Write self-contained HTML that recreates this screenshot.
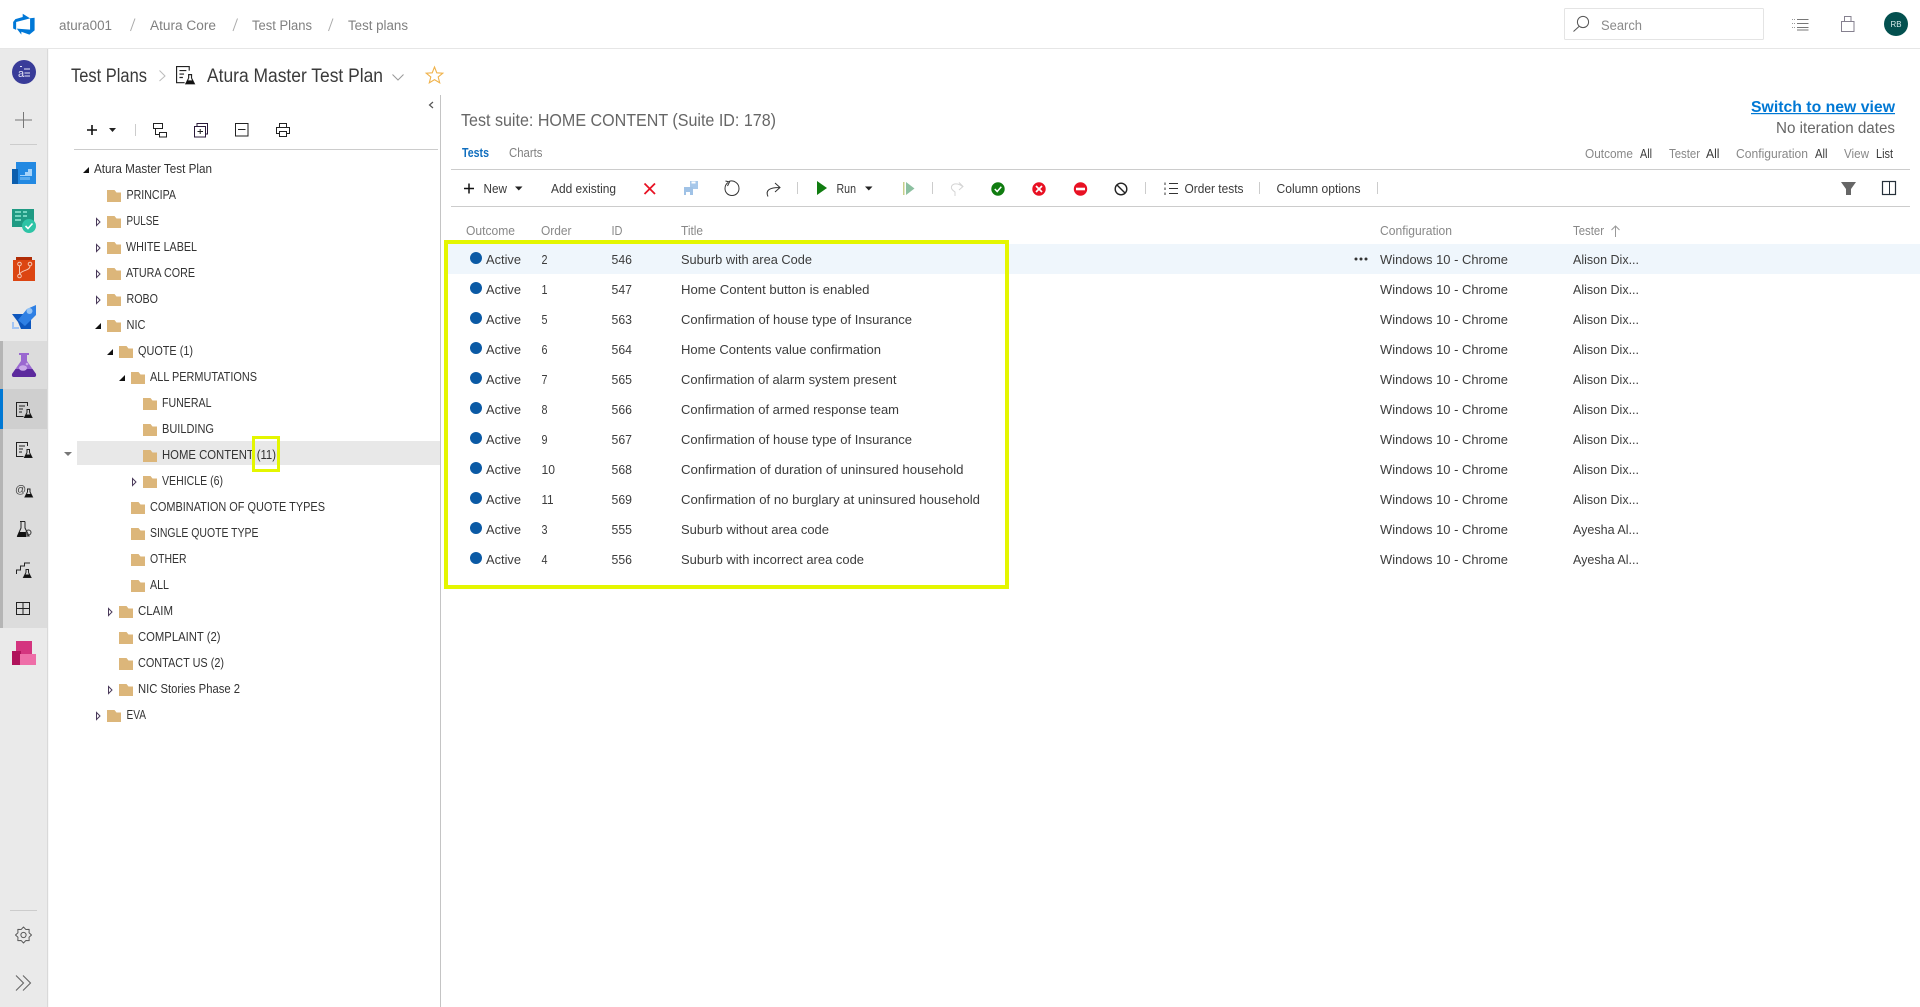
<!DOCTYPE html>
<html lang="en"><head><meta charset="utf-8"><title>Test plans</title>
<style>
html,body{margin:0;padding:0;background:#fff;width:1920px;height:1007px;overflow:hidden}
svg{display:block;font-family:"Liberation Sans",sans-serif}
text{white-space:pre}
.t{font-size:12.5px;fill:#333}
.r{font-size:13px;fill:#3c3c3c}
.h{font-size:12.5px;fill:#888}
.n{font-size:13.5px;fill:#808080}
.k{font-size:19px;fill:#3a3a3a}
.b{font-size:12.5px;fill:#3a3a3a}
.i{fill:none;stroke:#222;stroke-width:1}
</style></head><body>
<svg width="1920" height="1007" viewBox="0 0 1920 1007" xmlns="http://www.w3.org/2000/svg">
<defs>
<path id="f" d="M0 0H7.5L9.5 2.5H14V12H0Z" fill="#dcb67a"/>
<path id="c" d="M.5 .5L4 4L.5 7.5Z" fill="#fff" stroke="#4a3a5a"/>
<path id="e" d="M6 0V6H0Z" fill="#111"/>
<g id="fl"><path d="M10.5 7.5H14M11 7.5V10.5" fill="none" stroke="#222"/><path d="M13.5 7.5V10.5M11 10.5L8.5 15.5H16L13.5 10.5" fill="none" stroke="#222"/><path d="M10 12.5H14.5L16 15.5H8.5Z" fill="#111"/></g>
<g id="pi"><path d="M11.5 4V.5H.5V14.5H7.5" class="i"/><path d="M3 4H9M3 7H7M3 10H6" class="i"/><use href="#fl"/></g>
<g id="dot"><ellipse cx="476" cy="0" rx="6" ry="6" fill="#0b5aa5"/></g>
</defs>

<!-- top bar -->
<rect x="0" y="48" width="1920" height="1" fill="#e6e6e6"/>
<path transform="translate(12.5 12.5) scale(1.3)" fill="#0078d7" d="M17 4v9.74l-4 3.28-6.2-2.26V17l-3.51-4.59 10.23.8V4.44zm-3.41.49L7.85 1v2.43L2.22 5.08.5 7.29v5.04l2.3 1V7.32z"/>
<text class="n" x="59" y="30" textLength="53" lengthAdjust="spacingAndGlyphs">atura001</text>
<path d="M135 18.500L130.500 31M237.500 18.500L233 31M333 18.500L328.500 31" stroke="#aaa" fill="none"/>
<text class="n" x="150" y="30" textLength="66" lengthAdjust="spacingAndGlyphs">Atura Core</text>
<text class="n" x="252" y="30" textLength="60" lengthAdjust="spacingAndGlyphs">Test Plans</text>
<text class="n" x="348" y="30" textLength="60" lengthAdjust="spacingAndGlyphs">Test plans</text>

<rect x="1564.5" y="8.5" width="199" height="31" fill="#fff" stroke="#e4e4e4" rx="1"/>
<circle cx="1583" cy="22" r="5.6" fill="none" stroke="#555"/><path d="M1579 26.500L1573.500 31.500" stroke="#555" fill="none"/>
<text x="1601" y="30" font-size="13.500" fill="#8a8a8a" textLength="41" lengthAdjust="spacingAndGlyphs">Search</text>
<path d="M1797 19.500H1808.500M1797 23.500H1808.500M1797 27.500H1808.500M1797 30H1808.500" stroke="#777" fill="none"/>
<path d="M1792 19.500H1795M1792 23.500H1795M1792 27.500H1795" stroke="#999" stroke-dasharray="1 1" fill="none"/>
<rect x="1841.500" y="21.500" width="12.500" height="10" fill="none" stroke="#85808f"/><path d="M1844.500 21V16.500H1851V21" fill="none" stroke="#85808f"/>
<circle cx="1896" cy="24" r="12" fill="#03504f"/>
<text x="1890.500" y="27" font-size="8.500" fill="#d8ecec" textLength="11" lengthAdjust="spacingAndGlyphs">RB</text>

<!-- left nav -->
<rect x="0" y="49" width="47" height="958" fill="#eaeaea"/>
<rect x="47" y="49" width="1.200" height="958" fill="#d9d9d9"/>
<rect x="0" y="341" width="47" height="287" fill="#dcdcdc"/>
<rect x="0" y="341" width="3" height="287" fill="#b5b5b5"/>
<rect x="0" y="389" width="47" height="40" fill="#cfcfcf"/>
<rect x="0" y="389" width="3" height="40" fill="#0078d4"/>

<circle cx="24" cy="72" r="12" fill="#393c99"/>
<text x="18" y="77" font-size="11" fill="#e8e8f8">a</text>
<path d="M24 69H30M24.500 73H30M24.500 76H30M20 66.500H22" stroke="#e8e8f8" fill="none"/>
<path d="M15 120H32M23.500 112V128" stroke="#777" fill="none"/>
<rect x="10" y="144" width="27" height="1" fill="#ccc"/>

<rect x="16" y="162" width="20" height="22" fill="#2389e2"/><rect x="12" y="169" width="6" height="15" fill="#0c5ead"/>
<path d="M20 175H25V172H28V169H32V176H20Z" fill="#a5d3fa"/><rect x="20" y="177" width="10" height="3" fill="#5aabee"/>

<rect x="12" y="209" width="22" height="18" fill="#1f9a83"/>
<path d="M15 212H21M23 212H27M15 216H21M23 216H27M15 220H21" stroke="#74d4bf" stroke-width="2" fill="none"/>
<circle cx="29" cy="226" r="7" fill="#2ec4a6"/><path d="M25.500 226L28 228.500L32.500 223.500" stroke="#fff" stroke-width="1.600" fill="none"/>

<path d="M16 257H32V260H35V281H13V260H16Z" fill="#dc4512"/><path d="M16 257H32V260H16Z" fill="#b02c06"/>
<circle cx="19.500" cy="264" r="1.800" fill="none" stroke="#f4c9b6"/><circle cx="30" cy="264" r="1.800" fill="none" stroke="#f4c9b6"/><circle cx="19.500" cy="276" r="1.800" fill="none" stroke="#f4c9b6"/>
<path d="M19.500 266V274M30 266C30 271 21 270 20 274" stroke="#f4c9b6" fill="none"/>

<path d="M12 314H23L27 320L22 329H21L18 322Z" fill="#0e57bd"/><path d="M31 316V329H21L30 318Z" fill="#0e57bd"/>
<path d="M18 320L27 309L36 305V315L25 326Z" fill="#2f80e4"/><circle cx="29.500" cy="311" r="3" fill="#93c3f6"/>
<path d="M13 322V328H19" stroke="#a3c5f4" stroke-width="2" fill="none"/>

<path d="M19 353H29V355H27V361L36 374Q36.500 377 34 377H14Q11.500 377 12 374L21 361V355H19Z" fill="#9a68d0"/>
<path d="M15.500 369H32.500L36 374Q36.500 377 34 377H14Q11.500 377 12 374Z" fill="#5c2a9d"/>
<ellipse cx="23" cy="368" rx="4" ry="2.800" fill="#c9a9e8"/><circle cx="27" cy="364" r="1.300" fill="#c9a9e8"/>

<use href="#pi" x="16" y="402"/>
<use href="#pi" x="16" y="442"/>
<text x="15" y="493" font-size="11" fill="#444">@</text><use href="#fl" x="16.500" y="481.500"/>
<path d="M20 521.500H25M21 521.500V528L17.500 536H29L25 528V521.500" fill="none" stroke="#222"/><path d="M19 532H26V537H17Z" fill="#111"/><circle cx="28.500" cy="532.500" r="2.500" fill="none" stroke="#333"/>
<path d="M16.500 574V570H20.500V566H24.500V563H30" fill="none" stroke="#222"/><use href="#fl" x="15" y="562"/>
<rect x="16.500" y="602.500" width="13" height="12" fill="none" stroke="#222"/><path d="M23 602V615M16 608.500H30" stroke="#222" fill="none"/>

<rect x="16" y="641" width="16" height="14" fill="#d4357f"/><rect x="12" y="651" width="9" height="14" fill="#b0135b"/><rect x="20" y="654" width="16" height="11" fill="#ee6ea8"/>

<rect x="10" y="910" width="27" height="1" fill="#ccc"/>
<path transform="translate(23.500 935)" d="M8 0L5.540 2.300L5.660 5.660L2.300 5.540L0 8L-2.300 5.540L-5.660 5.660L-5.540 2.300L-8 0L-5.540 -2.300L-5.660 -5.660L-2.300 -5.540L0 -8L2.300 -5.540L5.660 -5.660L5.540 -2.300Z" fill="none" stroke="#5a5a5a" stroke-linejoin="round"/>
<circle cx="23.500" cy="935" r="2.600" fill="none" stroke="#5a5a5a"/>
<path d="M16 975.500L23.500 983L16 990.500M23 975.500L30.500 983L23 990.500" fill="none" stroke="#666" stroke-width="1.100"/>

<!-- page header -->
<text class="k" x="71" y="82" textLength="76" lengthAdjust="spacingAndGlyphs">Test Plans</text>
<path d="M159.500 70.500L165 76L159.500 81" fill="none" stroke="#bbb"/>
<use href="#pi" transform="translate(176 66) scale(1.150)"/>
<text class="k" x="207" y="82" textLength="176" lengthAdjust="spacingAndGlyphs">Atura Master Test Plan</text>
<path d="M392.500 74.500L398 80L403.500 74.500" fill="none" stroke="#999"/>
<path d="M434.500 67L436.800 72.800L442.800 73.200L438.200 77L439.700 82.800L434.500 79.600L429.300 82.800L430.800 77L426.200 73.200L432.200 72.800Z" fill="none" stroke="#f0b24a" stroke-width="1.100"/>

<!-- splitter -->
<rect x="440" y="95" width="1" height="912" fill="#c4c4c4"/>
<path d="M433 102L429.500 105L433 108" fill="none" stroke="#555" stroke-width="1.200"/>

<!-- tree toolbar -->
<path d="M87 130H97M92 125V135" stroke="#111" stroke-width="1.600" fill="none"/>
<path d="M109 128H116L112.500 132Z" fill="#222"/>
<rect x="135" y="124" width="1" height="12" fill="#ccc"/>
<rect x="153.500" y="123.500" width="9" height="5" class="i"/><rect x="159.500" y="132.500" width="7" height="4.500" class="i"/><path d="M155.500 128.500V134.500H159.500" class="i"/>
<rect x="194.500" y="126.500" width="11" height="10.500" fill="none" stroke="#2a1a3a"/><path d="M197 126V123.500H207.500V134H205.500" fill="none" stroke="#2a1a3a"/><path d="M197.500 131.500H203M200.200 129V134" stroke="#222" fill="none"/>
<rect x="235.500" y="123.500" width="12.500" height="12.500" class="i"/><path d="M238 129.500H245.500" class="i"/>
<rect x="276.500" y="127.500" width="13" height="6" class="i"/><rect x="279.500" y="123.500" width="7" height="4" class="i"/><rect x="279.500" y="131.500" width="7" height="5" fill="#fff" stroke="#222"/>
<rect x="74" y="149" width="364" height="1" fill="#ccc"/>

<!-- tree selected row -->
<rect x="77" y="441" width="363" height="24" fill="#e8e8e8"/>
<path d="M64 452H72L68 456Z" fill="#777"/>

<!-- tree -->
<use href="#e" x="83" y="167"/>
<text class="t" x="94" y="173" textLength="118" lengthAdjust="spacingAndGlyphs">Atura Master Test Plan</text>
<use href="#f" x="107" y="190"/>
<text class="t" x="126.500" y="199" textLength="49.500" lengthAdjust="spacingAndGlyphs">PRINCIPA</text>
<use href="#c" x="96" y="218"/><use href="#f" x="107" y="216"/>
<text class="t" x="126.500" y="225" textLength="32.500" lengthAdjust="spacingAndGlyphs">PULSE</text>
<use href="#c" x="96" y="244"/><use href="#f" x="107" y="242"/>
<text class="t" x="126" y="251" textLength="71" lengthAdjust="spacingAndGlyphs">WHITE LABEL</text>
<use href="#c" x="96" y="270"/><use href="#f" x="107" y="268"/>
<text class="t" x="126" y="277" textLength="69" lengthAdjust="spacingAndGlyphs">ATURA CORE</text>
<use href="#c" x="96" y="296"/><use href="#f" x="107" y="294"/>
<text class="t" x="126.500" y="303" textLength="31.500" lengthAdjust="spacingAndGlyphs">ROBO</text>
<use href="#e" x="95" y="323"/><use href="#f" x="107" y="320"/>
<text class="t" x="126.500" y="329" textLength="19" lengthAdjust="spacingAndGlyphs">NIC</text>
<use href="#e" x="107" y="349"/><use href="#f" x="119" y="346"/>
<text class="t" x="138" y="355" textLength="55" lengthAdjust="spacingAndGlyphs">QUOTE (1)</text>
<use href="#e" x="119" y="375"/><use href="#f" x="131" y="372"/>
<text class="t" x="150" y="381" textLength="107" lengthAdjust="spacingAndGlyphs">ALL PERMUTATIONS</text>
<use href="#f" x="143" y="398"/>
<text class="t" x="162" y="407" textLength="49.500" lengthAdjust="spacingAndGlyphs">FUNERAL</text>
<use href="#f" x="143" y="424"/>
<text class="t" x="162" y="433" textLength="52" lengthAdjust="spacingAndGlyphs">BUILDING</text>
<use href="#f" x="143" y="450"/>
<text class="t" x="162" y="459" textLength="114" lengthAdjust="spacingAndGlyphs">HOME CONTENT (11)</text>
<use href="#c" x="132" y="478"/><use href="#f" x="143" y="476"/>
<text class="t" x="162" y="485" textLength="61" lengthAdjust="spacingAndGlyphs">VEHICLE (6)</text>
<use href="#f" x="131" y="502"/>
<text class="t" x="150" y="511" textLength="175" lengthAdjust="spacingAndGlyphs">COMBINATION OF QUOTE TYPES</text>
<use href="#f" x="131" y="528"/>
<text class="t" x="150" y="537" textLength="108.500" lengthAdjust="spacingAndGlyphs">SINGLE QUOTE TYPE</text>
<use href="#f" x="131" y="554"/>
<text class="t" x="150" y="563" textLength="36.500" lengthAdjust="spacingAndGlyphs">OTHER</text>
<use href="#f" x="131" y="580"/>
<text class="t" x="150" y="589" textLength="19" lengthAdjust="spacingAndGlyphs">ALL</text>
<use href="#c" x="108" y="608"/><use href="#f" x="119" y="606"/>
<text class="t" x="138" y="615" textLength="35" lengthAdjust="spacingAndGlyphs">CLAIM</text>
<use href="#f" x="119" y="632"/>
<text class="t" x="138" y="641" textLength="82.500" lengthAdjust="spacingAndGlyphs">COMPLAINT (2)</text>
<use href="#f" x="119" y="658"/>
<text class="t" x="138" y="667" textLength="86" lengthAdjust="spacingAndGlyphs">CONTACT US (2)</text>
<use href="#c" x="108" y="686"/><use href="#f" x="119" y="684"/>
<text class="t" x="138" y="693" textLength="102" lengthAdjust="spacingAndGlyphs">NIC Stories Phase 2</text>
<use href="#c" x="96" y="712"/><use href="#f" x="107" y="710"/>
<text class="t" x="126.500" y="719" textLength="19.500" lengthAdjust="spacingAndGlyphs">EVA</text>

<!-- right header -->
<text x="461" y="126" font-size="17.500" fill="#666" textLength="315" lengthAdjust="spacingAndGlyphs">Test suite: HOME CONTENT (Suite ID: 178)</text>
<text x="462" y="157" font-size="12.500" font-weight="bold" fill="#106ebe" textLength="27" lengthAdjust="spacingAndGlyphs">Tests</text>
<text x="509" y="157" font-size="12.500" fill="#808080" textLength="33.500" lengthAdjust="spacingAndGlyphs">Charts</text>
<text x="1751" y="112" font-size="16px" font-weight="bold" fill="#0078d4" textLength="144" lengthAdjust="spacingAndGlyphs">Switch to new view</text>
<rect x="1751" y="113" width="144" height="1.200" fill="#0078d4"/>
<text x="1776" y="133" font-size="16" fill="#666" textLength="119" lengthAdjust="spacingAndGlyphs">No iteration dates</text>
<text class="h" x="1585" y="158" textLength="48" lengthAdjust="spacingAndGlyphs">Outcome</text>
<text class="b" x="1640" y="158" textLength="12" lengthAdjust="spacingAndGlyphs">All</text>
<text class="h" x="1669" y="158" textLength="31" lengthAdjust="spacingAndGlyphs">Tester</text>
<text class="b" x="1706" y="158" textLength="13.500" lengthAdjust="spacingAndGlyphs">All</text>
<text class="h" x="1736" y="158" textLength="72" lengthAdjust="spacingAndGlyphs">Configuration</text>
<text class="b" x="1815" y="158" textLength="12.500" lengthAdjust="spacingAndGlyphs">All</text>
<text class="h" x="1844" y="158" textLength="25" lengthAdjust="spacingAndGlyphs">View</text>
<text class="b" x="1876" y="158" textLength="17" lengthAdjust="spacingAndGlyphs">List</text>
<rect x="451" y="169" width="1459" height="1" fill="#ccc"/>
<rect x="451" y="206" width="1459" height="1" fill="#ccc"/>

<!-- right toolbar -->
<path d="M464 188.500H474M469 183.500V193.500" stroke="#111" stroke-width="1.500" fill="none"/>
<text class="b" x="483.500" y="193" textLength="23.500" lengthAdjust="spacingAndGlyphs">New</text>
<path d="M515 186.500H522.500L518.800 190.500Z" fill="#222"/>
<text class="b" x="551" y="193" textLength="65" lengthAdjust="spacingAndGlyphs">Add existing</text>
<path d="M644.500 183.500L655 194M655 183.500L644.500 194" stroke="#e81123" stroke-width="1.800" fill="none"/>
<rect x="690" y="181" width="8" height="8" fill="#a8c8ea"/><rect x="684" y="187" width="9" height="8" fill="#a0c2e6"/><rect x="691.500" y="181.500" width="4" height="2" fill="#fff"/><rect x="686" y="192" width="4" height="3" fill="#fff"/>
<path d="M729 181.500C734 179.500 739 183.500 739 188.500C739 192.500 736 195.500 732 195.500C728 195.500 725 192.500 725 188.500C725 186 726 184 728 182.500" fill="none" stroke="#333"/><path d="M725.500 181L729.500 182L727.500 186" fill="none" stroke="#333"/>
<path d="M768 196.500C765 190 770 187.500 779.500 187.500M775 183L780 187.500L775 192" fill="none" stroke="#333"/>
<rect x="797" y="182" width="1" height="12" fill="#ccc"/>
<path d="M817 181V195L827 188Z" fill="#107c10"/>
<text class="b" x="836.500" y="193" textLength="19.500" lengthAdjust="spacingAndGlyphs">Run</text>
<path d="M865 186.500H872.500L868.800 190.500Z" fill="#222"/>
<rect x="903" y="182" width="1.500" height="13" fill="#c7cf8b"/><path d="M906 182V195L914.500 188.500Z" fill="#8cc0a0"/>
<rect x="932" y="182" width="1" height="12" fill="#ccc"/>
<path d="M955 196V192C952 190 951 188 951.500 186.500C953 183 958 183 962.500 186.500M959 182.500L963 186.500L959 190" fill="none" stroke="#d4d4d4"/>
<circle cx="998" cy="189" r="6.700" fill="#107c10"/><path d="M994.800 189L997.200 191.500L1001.300 186.800" stroke="#fff" stroke-width="1.500" fill="none"/>
<circle cx="1039" cy="189" r="6.700" fill="#e81123"/><path d="M1036 186L1042 192M1042 186L1036 192" stroke="#fff" stroke-width="1.700" fill="none"/>
<circle cx="1080.500" cy="189" r="6.700" fill="#e81123"/><rect x="1076" y="187.700" width="9" height="2.600" fill="#fff"/>
<circle cx="1121" cy="189" r="5.800" fill="none" stroke="#222" stroke-width="1.400"/><path d="M1117 185L1125 193" stroke="#222" stroke-width="1.400"/>
<rect x="1145" y="182" width="1" height="12" fill="#ccc"/>
<path d="M1169 183.500H1178M1169 188.500H1178M1169 193.500H1178" stroke="#333" fill="none"/><path d="M1165 182.500V185M1165 187.500V190M1165 192.500V195" stroke="#333" fill="none"/>
<text class="b" x="1184.500" y="193" textLength="59" lengthAdjust="spacingAndGlyphs">Order tests</text>
<rect x="1259" y="182" width="1" height="12" fill="#ccc"/>
<text class="b" x="1276.500" y="193" textLength="84" lengthAdjust="spacingAndGlyphs">Column options</text>
<rect x="1377" y="182" width="1" height="12" fill="#ccc"/>
<path d="M1841 182H1856L1851 189V195H1846V189Z" fill="#666"/>
<rect x="1882.500" y="181.500" width="13" height="13" fill="none" stroke="#26303a" stroke-width="1.200"/><path d="M1889.500 181V195" stroke="#26303a"/>

<!-- grid header -->
<text class="h" x="466" y="235" textLength="49" lengthAdjust="spacingAndGlyphs">Outcome</text>
<text class="h" x="541" y="235" textLength="30.500" lengthAdjust="spacingAndGlyphs">Order</text>
<text class="h" x="611.500" y="235" textLength="11" lengthAdjust="spacingAndGlyphs">ID</text>
<text class="h" x="681" y="235" textLength="22" lengthAdjust="spacingAndGlyphs">Title</text>
<text class="h" x="1380" y="235" textLength="72" lengthAdjust="spacingAndGlyphs">Configuration</text>
<text class="h" x="1573" y="235" textLength="31" lengthAdjust="spacingAndGlyphs">Tester</text>
<path d="M1615.500 237V226M1611.500 230L1615.500 226L1619.500 230" fill="none" stroke="#999"/>

<!-- grid rows -->
<rect x="444" y="244" width="1476" height="30" fill="#eff6fc"/>
<circle cx="1356" cy="259" r="1.500" fill="#333"/><circle cx="1361" cy="259" r="1.500" fill="#333"/><circle cx="1366" cy="259" r="1.500" fill="#333"/>

<use href="#dot" y="258"/><text class="r" x="486" y="264" textLength="35" lengthAdjust="spacingAndGlyphs">Active</text><text class="r" x="541.500" y="264" textLength="6" lengthAdjust="spacingAndGlyphs">2</text><text class="r" x="611.500" y="264" textLength="20.500" lengthAdjust="spacingAndGlyphs">546</text><text class="r" x="681" y="264" textLength="131" lengthAdjust="spacingAndGlyphs">Suburb with area Code</text><text class="r" x="1380" y="264" textLength="128" lengthAdjust="spacingAndGlyphs">Windows 10 - Chrome</text><text class="r" x="1573" y="264" textLength="66" lengthAdjust="spacingAndGlyphs">Alison Dix...</text>
<use href="#dot" y="288"/><text class="r" x="486" y="294" textLength="35" lengthAdjust="spacingAndGlyphs">Active</text><text class="r" x="541.500" y="294" textLength="6" lengthAdjust="spacingAndGlyphs">1</text><text class="r" x="611.500" y="294" textLength="20.500" lengthAdjust="spacingAndGlyphs">547</text><text class="r" x="681" y="294" textLength="188.500" lengthAdjust="spacingAndGlyphs">Home Content button is enabled</text><text class="r" x="1380" y="294" textLength="128" lengthAdjust="spacingAndGlyphs">Windows 10 - Chrome</text><text class="r" x="1573" y="294" textLength="66" lengthAdjust="spacingAndGlyphs">Alison Dix...</text>
<use href="#dot" y="318"/><text class="r" x="486" y="324" textLength="35" lengthAdjust="spacingAndGlyphs">Active</text><text class="r" x="541.500" y="324" textLength="6" lengthAdjust="spacingAndGlyphs">5</text><text class="r" x="611.500" y="324" textLength="20.500" lengthAdjust="spacingAndGlyphs">563</text><text class="r" x="681" y="324" textLength="231" lengthAdjust="spacingAndGlyphs">Confirmation of house type of Insurance</text><text class="r" x="1380" y="324" textLength="128" lengthAdjust="spacingAndGlyphs">Windows 10 - Chrome</text><text class="r" x="1573" y="324" textLength="66" lengthAdjust="spacingAndGlyphs">Alison Dix...</text>
<use href="#dot" y="348"/><text class="r" x="486" y="354" textLength="35" lengthAdjust="spacingAndGlyphs">Active</text><text class="r" x="541.500" y="354" textLength="6" lengthAdjust="spacingAndGlyphs">6</text><text class="r" x="611.500" y="354" textLength="20.500" lengthAdjust="spacingAndGlyphs">564</text><text class="r" x="681" y="354" textLength="200" lengthAdjust="spacingAndGlyphs">Home Contents value confirmation</text><text class="r" x="1380" y="354" textLength="128" lengthAdjust="spacingAndGlyphs">Windows 10 - Chrome</text><text class="r" x="1573" y="354" textLength="66" lengthAdjust="spacingAndGlyphs">Alison Dix...</text>
<use href="#dot" y="378"/><text class="r" x="486" y="384" textLength="35" lengthAdjust="spacingAndGlyphs">Active</text><text class="r" x="541.500" y="384" textLength="6" lengthAdjust="spacingAndGlyphs">7</text><text class="r" x="611.500" y="384" textLength="20.500" lengthAdjust="spacingAndGlyphs">565</text><text class="r" x="681" y="384" textLength="215.500" lengthAdjust="spacingAndGlyphs">Confirmation of alarm system present</text><text class="r" x="1380" y="384" textLength="128" lengthAdjust="spacingAndGlyphs">Windows 10 - Chrome</text><text class="r" x="1573" y="384" textLength="66" lengthAdjust="spacingAndGlyphs">Alison Dix...</text>
<use href="#dot" y="408"/><text class="r" x="486" y="414" textLength="35" lengthAdjust="spacingAndGlyphs">Active</text><text class="r" x="541.500" y="414" textLength="6" lengthAdjust="spacingAndGlyphs">8</text><text class="r" x="611.500" y="414" textLength="20.500" lengthAdjust="spacingAndGlyphs">566</text><text class="r" x="681" y="414" textLength="218" lengthAdjust="spacingAndGlyphs">Confirmation of armed response team</text><text class="r" x="1380" y="414" textLength="128" lengthAdjust="spacingAndGlyphs">Windows 10 - Chrome</text><text class="r" x="1573" y="414" textLength="66" lengthAdjust="spacingAndGlyphs">Alison Dix...</text>
<use href="#dot" y="438"/><text class="r" x="486" y="444" textLength="35" lengthAdjust="spacingAndGlyphs">Active</text><text class="r" x="541.500" y="444" textLength="6" lengthAdjust="spacingAndGlyphs">9</text><text class="r" x="611.500" y="444" textLength="20.500" lengthAdjust="spacingAndGlyphs">567</text><text class="r" x="681" y="444" textLength="231" lengthAdjust="spacingAndGlyphs">Confirmation of house type of Insurance</text><text class="r" x="1380" y="444" textLength="128" lengthAdjust="spacingAndGlyphs">Windows 10 - Chrome</text><text class="r" x="1573" y="444" textLength="66" lengthAdjust="spacingAndGlyphs">Alison Dix...</text>
<use href="#dot" y="468"/><text class="r" x="486" y="474" textLength="35" lengthAdjust="spacingAndGlyphs">Active</text><text class="r" x="541.500" y="474" textLength="13.500" lengthAdjust="spacingAndGlyphs">10</text><text class="r" x="611.500" y="474" textLength="20.500" lengthAdjust="spacingAndGlyphs">568</text><text class="r" x="681" y="474" textLength="282.500" lengthAdjust="spacingAndGlyphs">Confirmation of duration of uninsured household</text><text class="r" x="1380" y="474" textLength="128" lengthAdjust="spacingAndGlyphs">Windows 10 - Chrome</text><text class="r" x="1573" y="474" textLength="66" lengthAdjust="spacingAndGlyphs">Alison Dix...</text>
<use href="#dot" y="498"/><text class="r" x="486" y="504" textLength="35" lengthAdjust="spacingAndGlyphs">Active</text><text class="r" x="541.500" y="504" textLength="12" lengthAdjust="spacingAndGlyphs">11</text><text class="r" x="611.500" y="504" textLength="20.500" lengthAdjust="spacingAndGlyphs">569</text><text class="r" x="681" y="504" textLength="299" lengthAdjust="spacingAndGlyphs">Confirmation of no burglary at uninsured household</text><text class="r" x="1380" y="504" textLength="128" lengthAdjust="spacingAndGlyphs">Windows 10 - Chrome</text><text class="r" x="1573" y="504" textLength="66" lengthAdjust="spacingAndGlyphs">Alison Dix...</text>
<use href="#dot" y="528"/><text class="r" x="486" y="534" textLength="35" lengthAdjust="spacingAndGlyphs">Active</text><text class="r" x="541.500" y="534" textLength="6" lengthAdjust="spacingAndGlyphs">3</text><text class="r" x="611.500" y="534" textLength="20.500" lengthAdjust="spacingAndGlyphs">555</text><text class="r" x="681" y="534" textLength="148" lengthAdjust="spacingAndGlyphs">Suburb without area code</text><text class="r" x="1380" y="534" textLength="128" lengthAdjust="spacingAndGlyphs">Windows 10 - Chrome</text><text class="r" x="1573" y="534" textLength="66" lengthAdjust="spacingAndGlyphs">Ayesha Al...</text>
<use href="#dot" y="558"/><text class="r" x="486" y="564" textLength="35" lengthAdjust="spacingAndGlyphs">Active</text><text class="r" x="541.500" y="564" textLength="6" lengthAdjust="spacingAndGlyphs">4</text><text class="r" x="611.500" y="564" textLength="20.500" lengthAdjust="spacingAndGlyphs">556</text><text class="r" x="681" y="564" textLength="183" lengthAdjust="spacingAndGlyphs">Suburb with incorrect area code</text><text class="r" x="1380" y="564" textLength="128" lengthAdjust="spacingAndGlyphs">Windows 10 - Chrome</text><text class="r" x="1573" y="564" textLength="66" lengthAdjust="spacingAndGlyphs">Ayesha Al...</text>

<!-- highlight boxes -->
<rect x="446" y="242" width="561" height="345" fill="none" stroke="#e4f600" stroke-width="4"/>
<rect x="253.500" y="437.500" width="25" height="33" fill="none" stroke="#e4f600" stroke-width="3"/>
</svg>
</body></html>
